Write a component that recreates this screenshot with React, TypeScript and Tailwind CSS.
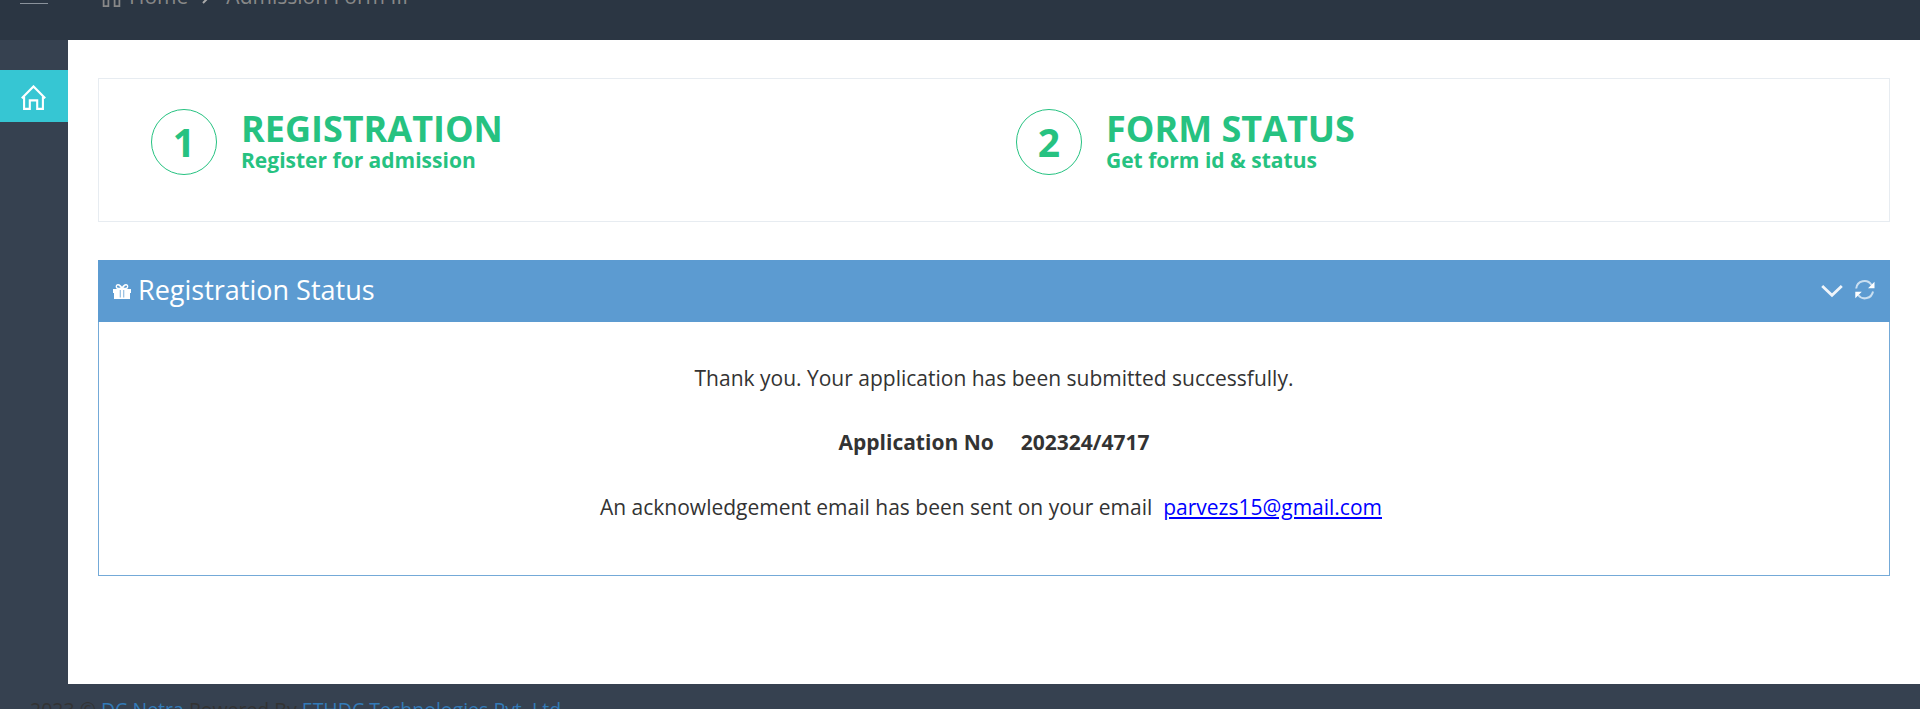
import React from "react";

function Step({ n, title, sub }: { n: string; title: string; sub: string }) {
  return (
    <div className="flex w-[865px] shrink-0 text-[#26c281]">
      <div className="flex h-[66px] w-[66px] items-center justify-center rounded-full border border-[#26c281] text-[39px] font-bold leading-[66px]">
        <span>{n}</span>
      </div>
      <div className="ml-[24px] pt-[2px]">
        <div className="h-[34px] text-[36px] font-bold leading-[36px]">{title}</div>
        <div className="text-[21px] font-bold leading-[30px]">{sub}</div>
      </div>
    </div>
  );
}

function HomeIcon({ className }: { className: string }) {
  return (
    <svg className={className} viewBox="0 0 25 25" fill="none" stroke="currentColor" strokeWidth="2.1">
      <path d="M0.8 13.3 12.5 1.4 24.2 13.3" />
      <path d="M3.1 11.6V23.9H8.8V15.4H16.2V23.9H21.9V11.6" />
    </svg>
  );
}

export default function App() {
  return (
    <div className="flex h-[709px] w-[1920px] flex-col overflow-hidden bg-[#364150] font-['Open_Sans',sans-serif] text-[21px] text-[#333333]">
      <header className="flex h-[40px] shrink-0 items-start overflow-hidden bg-[#2b3643] text-[#888888]">
        <div className="ml-[20px] mt-[3px] h-px w-[28px] bg-[#8a929b]" />
        <nav className="-mt-[19px] ml-[53px] flex items-start leading-[30px]">
          <HomeIcon className="mt-[5px] h-[21px] w-[21px]" />
          <span className="ml-[7px]">Home</span>
          <svg className="ml-[14px] mt-[11px] h-[12px] w-[8px]" viewBox="0 0 8 12" fill="none" stroke="#aaaaaa" strokeWidth="2">
            <path d="M1 1 6 6 1 11" />
          </svg>
          <span className="ml-[16px]">Admission Form III</span>
        </nav>
      </header>
      <div className="flex h-[644px] shrink-0">
        <aside className="w-[68px] shrink-0 pt-[30px]">
          <div className="flex h-[52px] items-start bg-[#36c6d3] pl-[21px] pt-[15px] text-white">
            <HomeIcon className="h-[25px] w-[25px]" />
          </div>
        </aside>
        <main className="flex-1 bg-white pl-[30px] pr-[30px] pt-[38px]">
          <section className="flex h-[144px] border border-[#e7ecf1] pl-[52px] pt-[30px]">
            <Step n="1" title="REGISTRATION" sub="Register for admission" />
            <Step n="2" title="FORM STATUS" sub="Get form id & status" />
          </section>
          <section className="mt-[38px] h-[316px] border border-t-0 border-[#74aad8]">
            <div className="-mx-px flex h-[62px] items-start bg-[#5c9bd1] text-white">
              <svg className="ml-[15px] mt-[23px] h-[17px] w-[18px]" viewBox="0 0 18 17" fill="currentColor">
                <path fillRule="evenodd" d="M0 6H4.500C2 5.500 2 1 5 1C7 1 8 2.500 9 3.800C10 2.500 11 1 13 1C16 1 16 5.500 13.500 6H18V10H17V16H1V10H0ZM5 2.500C3.500 2.500 3.700 4.700 5 4.700H7.500C6.500 3.500 6 2.500 5 2.500ZM13 2.500C12 2.500 11.500 3.500 10.500 4.700H13C14.300 4.700 14.500 2.500 13 2.500ZM6.800 7V14.500H11.200V7Z" />
                <path d="M7.600 6H10.400V15H7.600Z" />
              </svg>
              <h1 className="ml-[7px] mt-[12px] text-[27px] leading-[36px]">Registration Status</h1>
              <svg className="ml-auto mt-[24px] h-[14px] w-[22px]" viewBox="0 0 22 14" fill="none" stroke="#f0f5fa" strokeWidth="2.800">
                <path d="M1.200 2 11 11.300 20.800 2" />
              </svg>
              <svg className="ml-[12px] mr-[15px] mt-[20px] h-[20px] w-[20px]" viewBox="0 0 20 20" fill="none" stroke="#c9dff1" strokeWidth="2">
                <path d="M1.200 8.500A8.300 8.300 0 0 1 16.500 5M18 11.500A8.300 8.300 0 0 1 3.200 15" />
                <path d="M19.500 1.800V8.300H13ZM0.300 18.200V11.700H6.800Z" fill="white" stroke="none" />
              </svg>
            </div>
            <div className="pt-[40px] text-center leading-[32px]">
              <p>Thank you. Your application has been submitted successfully.</p>
              <p className="mt-[32px] flex justify-center gap-[27px] font-bold">
                <span>Application No</span>
                <span>202324/4717</span>
              </p>
              <p className="mt-[33px] pr-[6px]">
                An acknowledgement email has been sent on your email&nbsp;{" "}
                <a className="text-[#0000ff] underline">parvezs15@gmail.com</a>
              </p>
            </div>
          </section>
        </main>
      </div>
      <footer className="pl-[30px] pt-[11px] text-[19.5px] leading-[30px] text-[#333333]">
        2023 © <a className="text-[#337ab7]">DC Netra</a> Powered By <a className="text-[#337ab7]">ETHDC Technologies Pvt. Ltd.</a>
      </footer>
    </div>
  );
}
